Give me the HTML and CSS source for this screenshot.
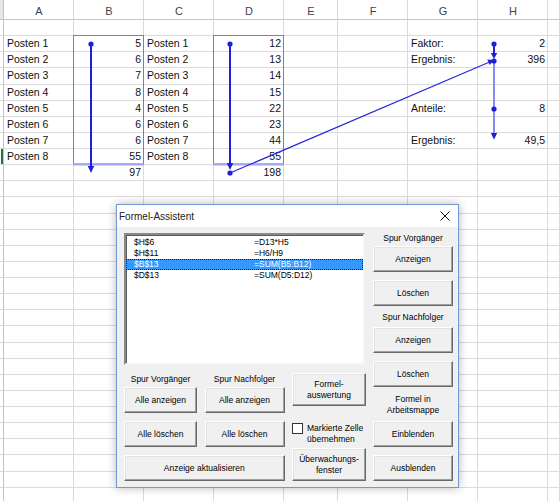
FILE: index.html
```html
<!DOCTYPE html>
<html lang="de">
<head>
<meta charset="utf-8">
<title>Formel-Assistent</title>
<link rel="stylesheet" href="styles.css">
</head>
<body>
<div class="sheet">
  <div class="row hdr"><i></i><i>A</i><i>B</i><i>C</i><i>D</i><i>E</i><i>F</i><i>G</i><i>H</i><i></i></div>
  <div class="row"><i></i><i></i><i></i><i></i><i></i><i></i><i></i><i></i><i></i><i></i></div>
  <div class="row"><i></i><i>Posten 1</i><i class="n">5</i><i>Posten 1</i><i class="n">12</i><i></i><i></i><i>Faktor:</i><i class="n">2</i><i></i></div>
  <div class="row"><i></i><i>Posten 2</i><i class="n">6</i><i>Posten 2</i><i class="n">13</i><i></i><i></i><i>Ergebnis:</i><i class="n">396</i><i></i></div>
  <div class="row"><i></i><i>Posten 3</i><i class="n">7</i><i>Posten 3</i><i class="n">14</i><i></i><i></i><i></i><i></i><i></i></div>
  <div class="row"><i></i><i>Posten 4</i><i class="n">8</i><i>Posten 4</i><i class="n">15</i><i></i><i></i><i></i><i></i><i></i></div>
  <div class="row"><i></i><i>Posten 5</i><i class="n">4</i><i>Posten 5</i><i class="n">22</i><i></i><i></i><i>Anteile:</i><i class="n">8</i><i></i></div>
  <div class="row"><i></i><i>Posten 6</i><i class="n">6</i><i>Posten 6</i><i class="n">23</i><i></i><i></i><i></i><i></i><i></i></div>
  <div class="row"><i></i><i>Posten 7</i><i class="n">6</i><i>Posten 7</i><i class="n">44</i><i></i><i></i><i>Ergebnis:</i><i class="n">49,5</i><i></i></div>
  <div class="row"><i class="act"></i><i>Posten 8</i><i class="n">55</i><i>Posten 8</i><i class="n">55</i><i></i><i></i><i></i><i></i><i></i></div>
  <div class="row"><i></i><i></i><i class="n">97</i><i></i><i class="n">198</i><i></i><i></i><i></i><i></i><i></i></div>
  <div class="row"><i></i><i></i><i></i><i></i><i></i><i></i><i></i><i></i><i></i><i></i></div>
  <div class="row"><i></i><i></i><i></i><i></i><i></i><i></i><i></i><i></i><i></i><i></i></div>
  <div class="row"><i></i><i></i><i></i><i></i><i></i><i></i><i></i><i></i><i></i><i></i></div>
  <div class="row"><i></i><i></i><i></i><i></i><i></i><i></i><i></i><i></i><i></i><i></i></div>
  <div class="row"><i></i><i></i><i></i><i></i><i></i><i></i><i></i><i></i><i></i><i></i></div>
  <div class="row"><i></i><i></i><i></i><i></i><i></i><i></i><i></i><i></i><i></i><i></i></div>
  <div class="row"><i></i><i></i><i></i><i></i><i></i><i></i><i></i><i></i><i></i><i></i></div>
  <div class="row"><i></i><i></i><i></i><i></i><i></i><i></i><i></i><i></i><i></i><i></i></div>
  <div class="row"><i></i><i></i><i></i><i></i><i></i><i></i><i></i><i></i><i></i><i></i></div>
  <div class="row"><i></i><i></i><i></i><i></i><i></i><i></i><i></i><i></i><i></i><i></i></div>
  <div class="row"><i></i><i></i><i></i><i></i><i></i><i></i><i></i><i></i><i></i><i></i></div>
  <div class="row"><i></i><i></i><i></i><i></i><i></i><i></i><i></i><i></i><i></i><i></i></div>
  <div class="row"><i></i><i></i><i></i><i></i><i></i><i></i><i></i><i></i><i></i><i></i></div>
  <div class="row"><i></i><i></i><i></i><i></i><i></i><i></i><i></i><i></i><i></i><i></i></div>
  <div class="row"><i></i><i></i><i></i><i></i><i></i><i></i><i></i><i></i><i></i><i></i></div>
  <div class="row"><i></i><i></i><i></i><i></i><i></i><i></i><i></i><i></i><i></i><i></i></div>
  <div class="row"><i></i><i></i><i></i><i></i><i></i><i></i><i></i><i></i><i></i><i></i></div>
  <div class="row"><i></i><i></i><i></i><i></i><i></i><i></i><i></i><i></i><i></i><i></i></div>
  <div class="row"><i></i><i></i><i></i><i></i><i></i><i></i><i></i><i></i><i></i><i></i></div>
  <div class="row"><i></i><i></i><i></i><i></i><i></i><i></i><i></i><i></i><i></i><i></i></div>

  <svg class="tracers" width="560" height="501" viewBox="0 0 560 501">
    <rect x="73.5" y="35.5" width="70" height="128.5" fill="none" stroke="#7474ec" stroke-width="1"/>
    <line x1="73" y1="164.5" x2="144" y2="164.5" stroke="#a4a4f6" stroke-width="2"/>
    <rect x="213.5" y="35.5" width="70" height="128.5" fill="none" stroke="#7474ec" stroke-width="1"/>
    <line x1="213" y1="164.5" x2="284" y2="164.5" stroke="#a4a4f6" stroke-width="2"/>

    <line x1="91" y1="44" x2="91" y2="167" stroke="#1f1fd6" stroke-width="2"/>
    <circle cx="91" cy="44" r="2.6" fill="#1f1fd6"/>
    <polygon points="87.8,166 94.2,166 91,173" fill="#1f1fd6"/>

    <line x1="230" y1="44" x2="230" y2="164" stroke="#1f1fd6" stroke-width="2"/>
    <circle cx="230" cy="44" r="2.6" fill="#1f1fd6"/>
    <polygon points="226.8,163 233.2,163 230,170" fill="#1f1fd6"/>
    <circle cx="230" cy="173" r="2.6" fill="#1f1fd6"/>
    <line x1="230" y1="173" x2="489" y2="62.2" stroke="#2a2ad8" stroke-width="1.2"/>
    <polygon points="494,60 489.7,65.1 487.3,59.6" fill="#1f1fd6"/>

    <line x1="494" y1="61" x2="494" y2="134" stroke="#8a8af4" stroke-width="2"/>
    <line x1="494" y1="44" x2="494" y2="53" stroke="#1f1fd6" stroke-width="2"/>
    <circle cx="494" cy="44" r="2.6" fill="#1f1fd6"/>
    <polygon points="490.8,53 497.2,53 494,59" fill="#1f1fd6"/>
    <circle cx="494" cy="61" r="2.6" fill="#1f1fd6"/>
    <circle cx="494" cy="109" r="2.6" fill="#1f1fd6"/>
    <polygon points="490.8,133 497.2,133 494,139.5" fill="#1f1fd6"/>
  </svg>

  <div class="dlg">
    <div class="title">
      <span>Formel-Assistent</span>
      <svg class="close" width="10" height="10" viewBox="0 0 10 10"><path d="M0.5 0.5 L9.5 9.5 M9.5 0.5 L0.5 9.5" stroke="#111" stroke-width="1" fill="none"/></svg>
    </div>
    <div class="body">
      <div class="left">
        <div class="lst">
          <div class="it"><span>$H$6</span><span>=D13*H5</span></div>
          <div class="it"><span>$H$11</span><span>=H6/H9</span></div>
          <div class="it sel"><span>$B$13</span><span>=SUM(B5:B12)</span></div>
          <div class="it"><span>$D$13</span><span>=SUM(D5:D12)</span></div>
        </div>
        <div class="bottom">
          <div class="grp g1"><div class="lbl">Spur Vorgänger</div><div class="btn">Alle anzeigen</div></div>
          <div class="grp g2"><div class="lbl">Spur Nachfolger</div><div class="btn">Alle anzeigen</div></div>
          <div class="btn b21">Alle löschen</div>
          <div class="btn b22">Alle löschen</div>
          <div class="btn b3">Anzeige aktualisieren</div>
          <div class="c3">
            <div class="btn tall">Formel-<br>auswertung</div>
            <div class="chk"><span class="box"></span><span>Markierte Zelle<br>übernehmen</span></div>
            <div class="btn tall">Überwachungs-<br>fenster</div>
          </div>
        </div>
      </div>
      <div class="right">
        <div class="lbl r1">Spur Vorgänger</div>
        <div class="btn">Anzeigen</div>
        <div class="btn gap">Löschen</div>
        <div class="lbl r2">Spur Nachfolger</div>
        <div class="btn">Anzeigen</div>
        <div class="btn gap">Löschen</div>
        <div class="lbl r3">Formel in<br>Arbeitsmappe</div>
        <div class="btn">Einblenden</div>
        <div class="btn gap">Ausblenden</div>
      </div>
    </div>
  </div>
</div>
</body>
</html>
```

FILE: styles.css
```css
html, body {
  margin: 0;
  padding: 0;
  background: #fff;
}

body {
  font-family: "Liberation Sans", Arial, sans-serif;
  color: #000;
}

.sheet {
  position: relative;
  width: 560px;
  height: 501px;
  overflow: hidden;
  background: #fff;
}

.row {
  display: grid;
  grid-template-columns: 4px 70px 70px 70px 70px 54px 70px 70px 70px 1fr;
  height: 16.13px;
}

.row > i {
  font-style: normal;
  box-sizing: border-box;
  border-right: 1px solid #dadada;
  border-bottom: 1px solid #dadada;
  font-size: 10.5px;
  line-height: 15px;
  padding: 0 2px 0 3px;
  white-space: nowrap;
  overflow: hidden;
  color: #111;
}

.row > i:first-child {
  padding: 0;
  border-right-color: #c4c4c4;
}

.row > i.act {
  box-shadow: inset -2px 0 0 #217346;
}

.row > i.n {
  text-align: right;
}

.hdr {
  height: 20px;
}

.hdr > i {
  text-align: center;
  color: #444;
  font-size: 11px;
  line-height: 23px;
  border-bottom-color: #c6c6c6;
}

.hdr > i:first-child {
  background: #e6e6e6;
}

.tracers {
  position: absolute;
  left: 0;
  top: 0;
  pointer-events: none;
}

/* dialog window */
.dlg {
  position: absolute;
  left: 116px;
  top: 204px;
  width: 343px;
  height: 284px;
  box-sizing: border-box;
  border: 1px solid #7398d2;
  background: #f0f0f0;
  box-shadow: 0 0 9px rgba(0, 0, 0, 0.28);
  font-size: 8.5px;
  color: #000;
}

.title {
  height: 22px;
  background: #fff;
  display: flex;
  align-items: center;
  justify-content: space-between;
  padding: 0 8px 0 2px;
  font-size: 10px;
  color: #222;
}

.close {
  display: block;
}

.body {
  display: flex;
  gap: 8px;
  padding: 6px 4px 0 7px;
}

.left {
  width: 241px;
}

.lst {
  box-sizing: border-box;
  width: 241px;
  height: 132px;
  background: #fff;
  border: 2px solid;
  border-color: #8a8a8a #f4f4f4 #f4f4f4 #8a8a8a;
  box-shadow: inset 1px 1px 0 #5a5a5a;
  padding-top: 2px;
}

.it {
  display: grid;
  grid-template-columns: 128px 1fr;
  height: 11px;
  line-height: 11px;
}

.it > span:first-child {
  padding-left: 8px;
}

.it.sel {
  background: #3399ff;
  color: #fff;
  outline: 1px dotted #1a1a1a;
  outline-offset: -1px;
}

.btn {
  box-sizing: border-box;
  height: 26px;
  display: flex;
  align-items: center;
  justify-content: center;
  text-align: center;
  line-height: 11px;
  background: #f0f0f0;
  border: 1px solid;
  border-color: #ffffff #696969 #696969 #ffffff;
  box-shadow: inset -1px -1px 0 #a0a0a0, inset 1px 1px 0 #e3e3e3;
}

.lbl {
  text-align: center;
  line-height: 11px;
}

.bottom {
  display: grid;
  grid-template-columns: 73px 80px 74px;
  grid-template-rows: 40px 26px 26px;
  column-gap: 7.5px;
  row-gap: 8px;
  margin-top: 8px;
}

.grp {
  display: flex;
  flex-direction: column;
}

.grp .lbl {
  height: 14px;
  padding-top: 1px;
  box-sizing: border-box;
}

.g1 { grid-column: 1; grid-row: 1; }
.g2 { grid-column: 2; grid-row: 1; }
.b21 { grid-column: 1; grid-row: 2; }
.b22 { grid-column: 2; grid-row: 2; }
.b3 { grid-column: 1 / 3; grid-row: 3; }

.c3 {
  grid-column: 3;
  grid-row: 1 / 4;
  display: flex;
  flex-direction: column;
}

.btn.tall {
  height: 33px;
}

.chk {
  display: flex;
  align-items: flex-start;
  gap: 4px;
  margin-top: 17px;
  line-height: 11px;
  flex: 1;
}

.chk .box {
  box-sizing: border-box;
  width: 11px;
  height: 11px;
  margin-top: 0;
  background: #fff;
  border: 1px solid #333;
  flex: none;
}

.right {
  width: 80px;
  display: flex;
  flex-direction: column;
}

.right .gap {
  margin-top: 8px;
}

.r1 {
  height: 13px;
}

.r2 {
  height: 21px;
  padding-top: 6px;
  box-sizing: border-box;
}

.r3 {
  height: 34px;
  padding-top: 7px;
  box-sizing: border-box;
}
```
